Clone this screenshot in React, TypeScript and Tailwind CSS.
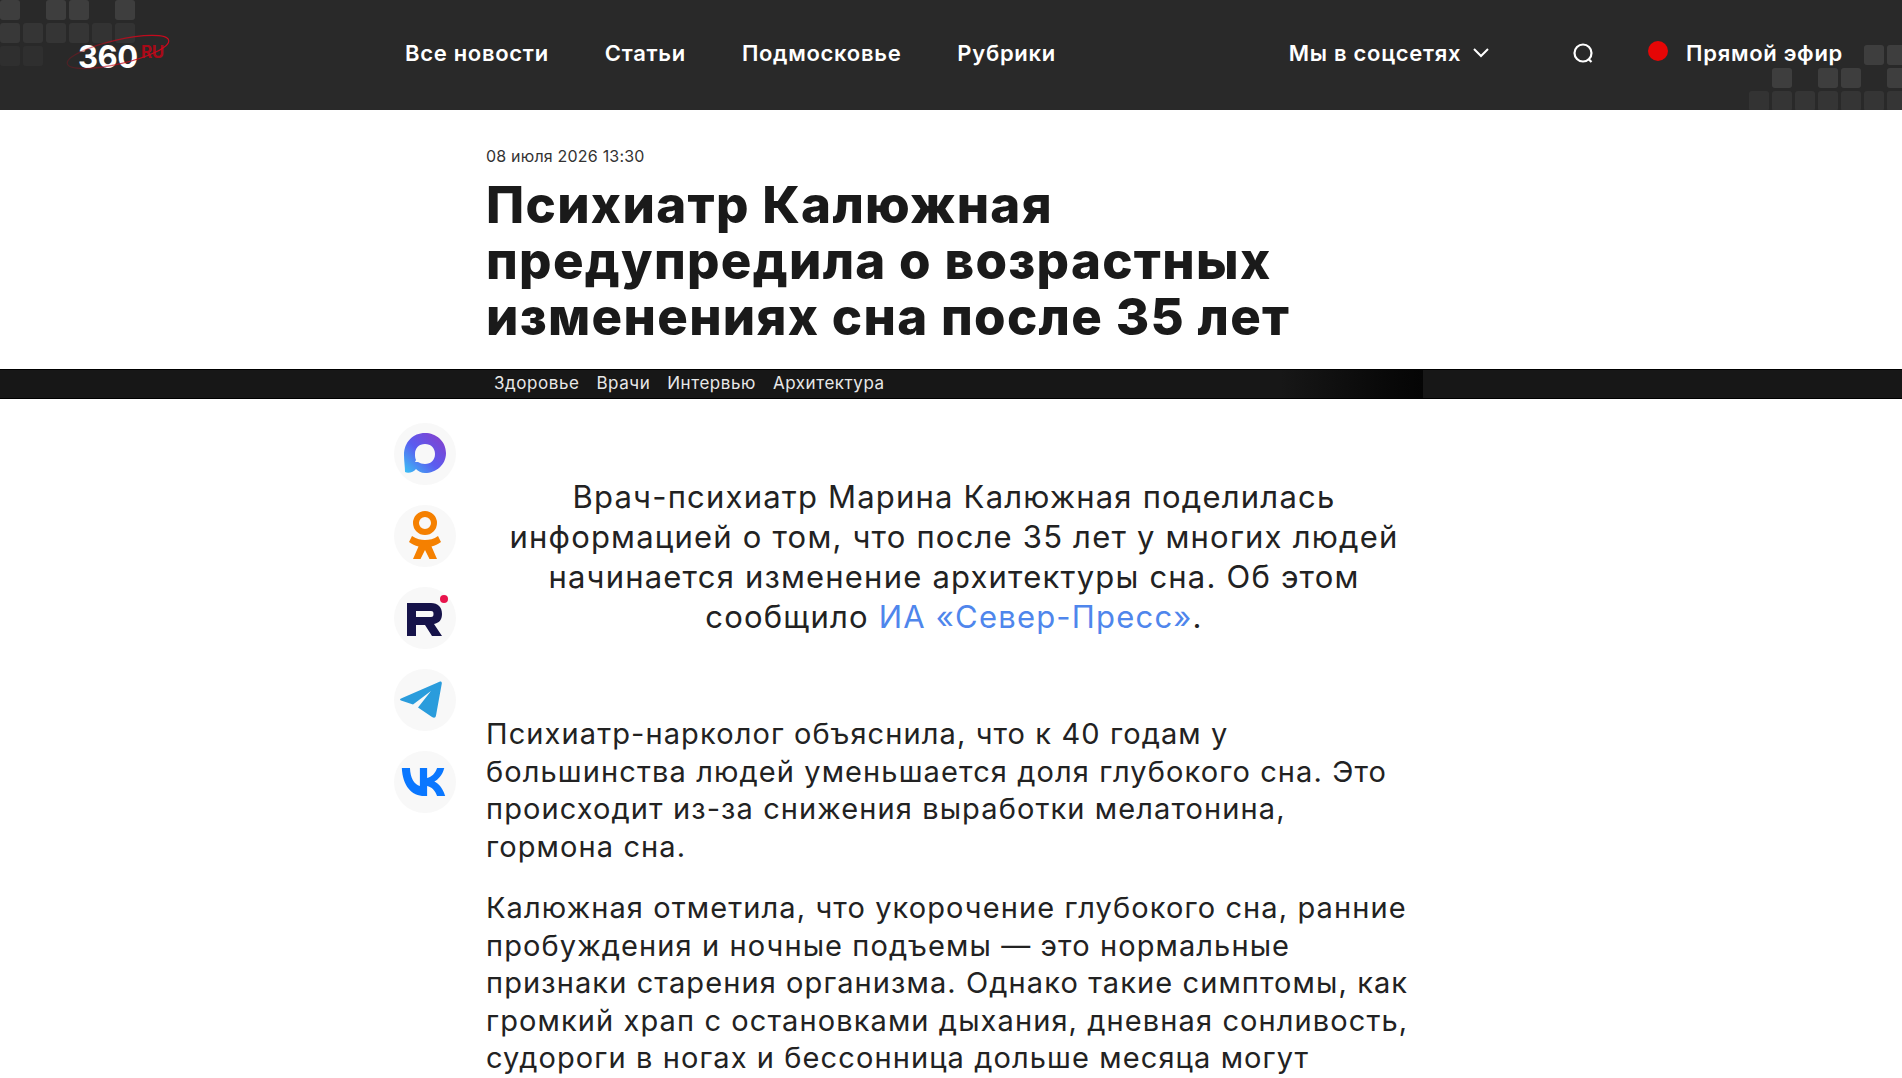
const F = { fontFamily: '"Inter", "Noto Sans", sans-serif' };

function Squares({ rows, className }: { rows: number[][]; className: string }) {
  return (
    <div className={`flex flex-col gap-[3px] ${className}`}>
      {rows.map((row, i) => (
        <div key={i} className="flex gap-[3px]">
          {row.map((o, j) => (
            <div key={j} className="w-[20px] h-[20px] rounded-[3px]" style={{ background: `rgba(255,255,255,${o})` }} />
          ))}
        </div>
      ))}
    </div>
  );
}

function Circle({ children }: { children: React.ReactNode }) {
  return <div className="w-[62px] h-[62px] rounded-full bg-[#f8f8f8] flex items-center justify-center">{children}</div>;
}

const nav = ["Все новости", "Статьи", "Подмосковье", "Рубрики"];
const tags = ["Здоровье", "Врачи", "Интервью", "Архитектура"];

export default function App() {
  return (
    <div className="h-[1078px] overflow-hidden bg-white text-[#1a1a1a]" style={F}>
      <header className="relative h-[110px] bg-[#292929] text-white overflow-hidden flex items-start">
        <Squares className="absolute left-0 top-0" rows={[[.1,0,.1,.1,0,.1],[.07,.06,.06,.06,.05,.05],[.03,.03,0,0,0,0]]} />
        <Squares className="absolute right-[-5px] top-[45px]" rows={[[0,0,0,0,0,.1,.1],[0,.1,0,.1,.1,0,.1],[.05,.06,.06,.06,.06,.06,.06]]} />
        <div className="relative ml-[78px] mt-[30px] w-[100px] h-[44px]">
          <span className="absolute left-0 top-[10px] text-[31px] leading-[34px] font-bold tracking-[-0.5px]">360</span>
          <span className="absolute left-[63px] top-[13px] text-[17px] leading-[18px] font-bold text-[#a80a18] tracking-[-0.5px]">RU</span>
          <svg className="absolute left-[-14px] top-[0px]" width="110" height="44" viewBox="0 0 110 44" fill="none">
            <defs><linearGradient id="e" x1="0" y1="0" x2="1" y2="0"><stop offset="0" stopColor="#b8081a" stopOpacity=".25" /><stop offset=".7" stopColor="#c8081c" stopOpacity=".9" /><stop offset="1" stopColor="#d0081c" /></linearGradient></defs>
            <ellipse cx="54" cy="22" rx="52" ry="12" transform="rotate(-13 54 22)" stroke="url(#e)" strokeWidth="1.2" />
          </svg>
        </div>
        <nav className="flex gap-[56px] ml-[227px] mt-[40px] text-[22px] leading-[26px] font-semibold tracking-[0.7px]">
          {nav.map((n) => <span key={n}>{n}</span>)}
        </nav>
        <div className="ml-auto mt-[40px] flex items-center text-[22px] leading-[26px] font-semibold tracking-[0.7px] mr-[59px]">
          <span>Мы в соцсетях</span>
          <svg className="ml-[12px]" width="16" height="10" viewBox="0 0 16 10" fill="none" stroke="white" strokeWidth="2"><path d="M1 1l7 7 7-7" /></svg>
          <svg className="ml-[83px]" width="22" height="22" viewBox="0 0 22 22" fill="none" stroke="white" strokeWidth="2.2"><circle cx="11" cy="11" r="8.5" /><path d="M16.5 17l3 3" /></svg>
          <span className="ml-[54px] w-[20px] h-[20px] rounded-full bg-[#e60606] mt-[-4px]" />
          <span className="ml-[18px]">Прямой эфир</span>
        </div>
      </header>

      <div className="pl-[486px]">
        <div className="pt-[36px] text-[16px] leading-[20px] text-[#333] tracking-[0.2px]">08 июля 2026 13:30</div>
        <h1 className="mt-[11px] text-[51px] leading-[56px] font-extrabold tracking-[1.3px]">
          Психиатр Калюжная<br />предупредила о возрастных<br />изменениях сна после 35 лет
        </h1>
      </div>

      <div className="mt-[24px] h-[30px] bg-[#171717] border-y border-black text-[#e8e8e8]">
        <div className="relative w-[1423px] h-full bg-gradient-to-r from-[#171717] from-[90%] to-[#050505] pl-[494px] flex items-center gap-[17px] text-[17px] leading-[26px] tracking-[0.55px] pb-[2px]">
          {tags.map((t) => <span key={t}>{t}</span>)}
        </div>
      </div>

      <div className="flex">
        <aside className="ml-[394px] mt-[24px] w-[92px] flex flex-col gap-[20px]">
          <Circle>
            <svg width="46" height="46" viewBox="0 0 46 46">
              <defs><linearGradient id="m" x1="0" y1="1" x2="1" y2="0"><stop offset="0" stopColor="#3ac4f5" /><stop offset=".45" stopColor="#5a5cf0" /><stop offset="1" stopColor="#8a3cc8" /></linearGradient></defs>
              <path fillRule="evenodd" fill="url(#m)" d="M23 2C34 2 44 10 44 22C44 34 34 42 23 42C19 42 16 40 14 38C12 41 6 43 3 41C3 36 2 30 2 24C2 11 11 2 23 2ZM23 13C17 13 13 17 13 23C13 25 13 27 14 29L13 31L16 31C18 32 20 33 23 33C29 33 33 29 33 23C33 17 29 13 23 13Z" />
            </svg>
          </Circle>
          <Circle>
            <svg className="mb-[2px]" width="32" height="48" viewBox="0 0 32 48" fill="#f58000">
              <path fillRule="evenodd" d="M16 0a12 12 0 1 1 0 24a12 12 0 0 1 0-24ZM16 6a6 6 0 1 0 0 12a6 6 0 0 0 0-12Z" />
              <path d="M3 25C8 28 12 29 16 29C20 29 25 28 29 25L32 31C29 33 26 34.5 22.5 35.5L28 48H20.5L16 39L11.5 48H4L9.5 35.5C6 34.5 3 33 0 31Z" />
            </svg>
          </Circle>
          <Circle>
            <div className="relative w-[46px] h-[46px] mb-[2px]">
              <svg width="46" height="46" viewBox="0 0 46 46" fill="#16134a">
                <path fillRule="evenodd" d="M5 9H29C36 9 40 13 40 20C40 26 37 29 32 30L40 42H30L23 31H14V42H5ZM14 17V23H29C31 23 31.5 22 31.5 20C31.5 18 31 17 29 17Z" />
              </svg>
              <span className="absolute right-0 top-[1px] w-[8px] h-[8px] rounded-full bg-[#e8144c]" />
            </div>
          </Circle>
          <Circle>
            <svg className="mr-[8px] mb-[1px]" width="42" height="37" viewBox="0 0 42 37" fill="#2a9cdc">
              <path d="M1 17.5L39.5 .7C41 0 42 1 41.8 2.5L36 34.5C35.5 37 34 37.3 32 36L18 26.5L31 10L13 23.5L1 19.5C-.3 19 -.3 18 1 17.5Z" />
            </svg>
          </Circle>
          <Circle>
            <svg className="mr-[3px]" width="45" height="28" viewBox="0 0 48 31" fill="#0a77ff">
              <path d="M0 0H9C9.5 12 14 18 20 20V0H28V11C33 10 37 6 39 0H47C45 8 40 13 36 15C40 17 45 21 48 31H39C37 25 33 21 28 20V31H25C11 31 1 20 0 0Z" />
            </svg>
          </Circle>
        </aside>
        <main className="w-[936px] pt-[78px] text-[#222]">
          <p className="text-center text-[31px] leading-[40px] tracking-[1.2px]">
            Врач-психиатр Марина Калюжная поделилась<br />информацией о том, что после 35 лет у многих людей<br />начинается изменение архитектуры сна. Об этом<br />сообщило <a className="text-[#4f86ec]">ИА «Север-Пресс»</a>.
          </p>
          <p className="mt-[78px] text-[29px] leading-[37.5px] tracking-[1.1px]">
            Психиатр-нарколог объяснила, что к 40 годам у<br />большинства людей уменьшается доля глубокого сна. Это<br />происходит из-за снижения выработки мелатонина,<br />гормона сна.
          </p>
          <p className="mt-[24px] text-[29px] leading-[37.5px] tracking-[1.1px]">
            Калюжная отметила, что укорочение глубокого сна, ранние<br />пробуждения и ночные подъемы — это нормальные<br />признаки старения организма. Однако такие симптомы, как<br />громкий храп с остановками дыхания, дневная сонливость,<br />судороги в ногах и бессонница дольше месяца могут
          </p>
        </main>
      </div>
    </div>
  );
}
